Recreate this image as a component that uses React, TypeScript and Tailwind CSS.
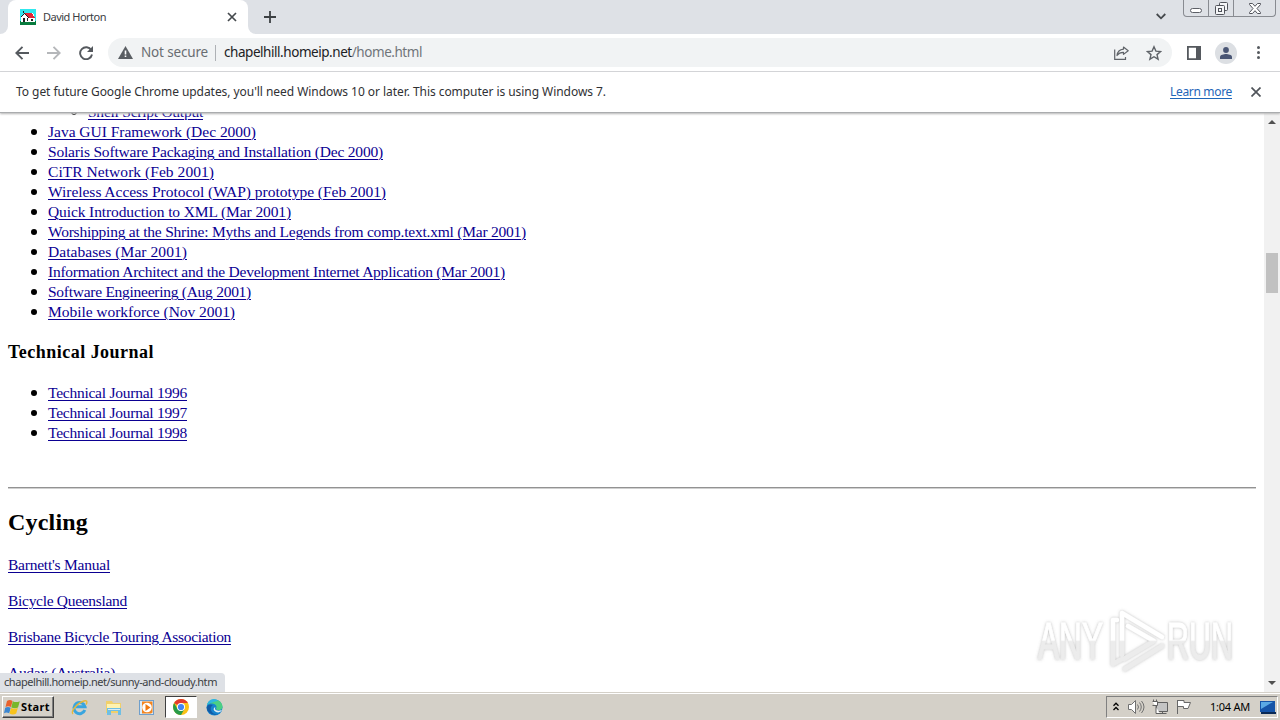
import { useLayoutEffect, useRef, type ReactNode } from "react";

/** Spaces a single line of text so that it fills the given width. */
function Fit({ w, className = "", children }: { w: number; className?: string; children: ReactNode }) {
  const ref = useRef<HTMLSpanElement>(null);
  useLayoutEffect(() => {
    const el = ref.current;
    if (!el) return;
    el.style.letterSpacing = "0px";
    const n = (el.textContent ?? "").length;
    el.style.letterSpacing = `${(w - el.getBoundingClientRect().width) / n}px`;
  }, [w]);
  return (
    <span ref={ref} className={`inline-block whitespace-nowrap ${className}`}>
      {children}
    </span>
  );
}

const publications: [string, number][] = [
  ["Java GUI Framework (Dec 2000)", 208],
  ["Solaris Software Packaging and Installation (Dec 2000)", 335],
  ["CiTR Network (Feb 2001)", 166],
  ["Wireless Access Protocol (WAP) prototype (Feb 2001)", 338],
  ["Quick Introduction to XML (Mar 2001)", 243],
  ["Worshipping at the Shrine: Myths and Legends from comp.text.xml (Mar 2001)", 478],
  ["Databases (Mar 2001)", 139],
  ["Information Architect and the Development Internet Application (Mar 2001)", 457],
  ["Software Engineering (Aug 2001)", 203],
  ["Mobile workforce (Nov 2001)", 187],
];
const journals: [string, number][] = [
  ["Technical Journal 1996", 139],
  ["Technical Journal 1997", 139],
  ["Technical Journal 1998", 139],
];
const cycling: [string, number][] = [
  ["Barnett's Manual", 102],
  ["Bicycle Queensland", 119],
  ["Brisbane Bicycle Touring Association", 223],
  ["Audax (Australia)", 107],
];

function PageLink({ text, w }: { text: string; w: number }) {
  return (
    <a className="text-[#0b0092]">
      <Fit w={w} className="underline decoration-1 underline-offset-2">{text}</Fit>
    </a>
  );
}

function LinkList({ items }: { items: [string, number][] }) {
  return (
    <ul>
      {items.map(([text, w]) => (
        <li key={text} className="flex h-5 items-center pl-[23px] leading-5">
          <span className="mr-[11px] size-[6px] rounded-full bg-black" />
          <PageLink text={text} w={w} />
        </li>
      ))}
    </ul>
  );
}

function TabStrip() {
  return (
    <header className="flex h-[34px] bg-[#dee1e6]">
      <div className="flex w-2 items-end bg-white"><div className="h-full w-full rounded-br-lg bg-[#dee1e6]" /></div>
      <div className="flex w-[240px] items-center rounded-t-lg bg-white pl-3">
        <svg className="size-4" viewBox="0 0 16 16" shapeRendering="crispEdges">
          <path fill="#30e8ee" d="M0 0h16v16H0z" />
          <path fill="#087b3e" d="M0 12h16v4H0z" />
          <path fill="#fff" d="M1 8l3-4h9l2 5v4H1z" />
          <path fill="#e32636" d="M5 4h7l3 5H9z" />
          <path fill="#222" d="M1 8l3-4 5 5H8L4 5 1 9zM3 9h2v4H3zM7 9h1v3H7zM11 10h2v2h-2zM3 2h1v2H3z" />
        </svg>
        <Fit w={63} className="ml-[7px] text-[11px] text-[#3c4043]">David Horton</Fit>
        <svg className="ml-auto mr-[11px] size-[10px]" viewBox="0 0 10 10" stroke="#45494d" strokeWidth="1.7">
          <path d="M1 1l8 8M9 1L1 9" />
        </svg>
      </div>
      <div className="w-2 bg-white"><div className="h-full w-full rounded-bl-lg bg-[#dee1e6]" /></div>
      <svg className="ml-2 mt-[11px] size-3" viewBox="0 0 12 12" stroke="#3c4043" strokeWidth="1.8">
        <path d="M6 0v12M0 6h12" />
      </svg>
      <svg className="ml-auto mr-[17px] mt-[13px] h-[7px] w-[10px]" viewBox="0 0 10 7" fill="none" stroke="#45494d" strokeWidth="1.8">
        <path d="M.7 1L5 5.3 9.3 1" />
      </svg>
      <div className="mr-1 flex h-[17px] w-[93px] rounded-b-[4px] border border-t-0 border-[#888b91] bg-[#dee1e6]">
        <div className="flex w-[25px] items-end justify-center border-r border-[#888b91] pb-[3px]">
          <span className="h-[5px] w-[12px] rounded-sm border border-[#5c5f66] bg-white" />
        </div>
        <div className="flex w-[25px] items-center justify-center border-r border-[#888b91]">
          <svg className="size-[13px]" viewBox="0 0 13 13" fill="#f4f5f7" stroke="#50535a">
            <rect x="4.5" y=".5" width="8" height="8" rx="1" />
            <rect x=".5" y="3.5" width="9" height="9" rx="1" />
            <rect x="3.5" y="6.5" width="3" height="3" />
          </svg>
        </div>
        <div className="flex flex-1 items-center justify-center">
          <svg className="h-[11px] w-3" viewBox="0 0 12 11" fill="#fff" stroke="#50535a" strokeLinejoin="round">
            <path d="M.5.5h3L6 3.3 8.5.5h3v1L8 5.5l3.500 4v1h-3L6 7.700 3.500 10.500h-3v-1L4 5.500.5 1.500z" />
          </svg>
        </div>
      </div>
    </header>
  );
}

function Toolbar() {
  return (
    <nav className="flex h-[38px] items-center border-b border-[#d5d7da] bg-white">
      <svg className="ml-[15px] size-[14px]" viewBox="0 0 14 14" fill="none" stroke="#55595e" strokeWidth="1.9">
        <path d="M14 7H1.500M7.500.8L1.300 7l6.200 6.200" />
      </svg>
      <svg className="ml-[18px] size-[14px]" viewBox="0 0 14 14" fill="none" stroke="#b5b7ba" strokeWidth="1.9">
        <path d="M0 7h12.500M6.500.8L12.700 7l-6.200 6.200" />
      </svg>
      <svg className="ml-[18px] size-[14px]" viewBox="0 0 14 14" fill="none" stroke="#55595e" strokeWidth="1.9">
        <path d="M12.300 4.200A6 6 0 1 0 13 8.500" />
        <path d="M14 0v6H8z" fill="#55595e" stroke="none" />
      </svg>
      <div className="ml-[15px] flex h-[29px] w-[1064px] items-center rounded-full bg-[#f1f3f4]">
        <svg className="ml-[10px] h-[13px] w-[15px]" viewBox="0 0 15 13">
          <path fill="#5a5e63" d="M7.500 0L15 13H0z" />
          <path fill="#fff" d="M6.700 4.500h1.600v4H6.700zM6.700 9.500h1.600v1.600H6.700z" />
        </svg>
        <Fit w={67} className="ml-2 text-[13.500px] text-[#696d72]">Not secure</Fit>
        <span className="ml-[7px] h-4 w-px bg-[#aeb1b5]" />
        <Fit w={198} className="ml-2 text-[13.500px] text-[#202124]">
          chapelhill.homeip.net<span className="text-[#70757a]">/home.html</span>
        </Fit>
        <svg className="ml-auto mr-[17px] h-[14px] w-[15px]" viewBox="0 0 15 14" fill="none" stroke="#5f6368" strokeWidth="1.200">
          <path d="M.7 3.500v9.800h10.800V11" />
          <path strokeLinejoin="round" d="M9.500 1l4.700 3.700-4.700 3.700V6.300C6.500 6.200 4.600 7.200 3 9.500c.4-3.500 2.500-6 6.500-6.400z" />
        </svg>
        <svg className="mr-[10px] size-[16px]" viewBox="0 0 16 16" fill="none" stroke="#5f6368" strokeWidth="1.400">
          <path d="M8 1.800l1.900 4.300 4.700.4-3.600 3.100 1.100 4.600L8 11.700l-4.100 2.500L5 9.600 1.400 6.500l4.700-.4z" />
        </svg>
      </div>
      <svg className="ml-[15px] h-[14px] w-[14px]" viewBox="0 0 14 14" fill="none" stroke="#55595e" strokeWidth="1.800">
        <path d="M.9.9h12.200v12.200H.9z" />
        <path fill="#55595e" stroke="none" d="M9 0h5v14H9z" />
      </svg>
      <div className="ml-[14px] flex size-[22px] items-center justify-center rounded-full bg-[#dcdfe3]">
        <svg className="size-3" viewBox="0 0 12 12" fill="#4a5675">
          <circle cx="6" cy="3" r="2.900" />
          <path d="M0 12V9.800C0 7.900 4 7 6 7s6 .9 6 2.800V12z" />
        </svg>
      </div>
      <div className="ml-5 flex flex-col gap-[2px]">
        <span className="size-[3px] rounded-full bg-[#55595e]" />
        <span className="size-[3px] rounded-full bg-[#55595e]" />
        <span className="size-[3px] rounded-full bg-[#55595e]" />
      </div>
    </nav>
  );
}

function InfoBar() {
  return (
    <div className="relative z-10 flex h-[41px] items-center border-b border-[#aaacae] bg-white pl-4 text-[12px] text-[#303134] shadow-[0_1px_2px_#b5b5b5]">
      <Fit w={590}>To get future Google Chrome updates, you'll need Windows 10 or later. This computer is using Windows 7.</Fit>
      <Fit w={62} className="ml-auto text-[#1f66b8] underline underline-offset-2">Learn more</Fit>
      <svg className="ml-[19px] mr-[19px] size-[10px]" viewBox="0 0 10 10" stroke="#50545a" strokeWidth="1.700">
        <path d="M.5.5l9 9M9.500.5l-9 9" />
      </svg>
    </div>
  );
}

function Watermark() {
  return (
    <svg className="absolute left-[1030px] top-[487px] h-[80px] w-[215px]" viewBox="0 0 215 80" fill="none">
      <defs>
        <filter id="soft" x="-10%" y="-10%" width="120%" height="120%">
          <feDropShadow dx="0" dy="0" stdDeviation="1.800" floodColor="#777" floodOpacity=".5" />
        </filter>
        <linearGradient id="tone" x1="0" y1="0" x2="0" y2="80" gradientUnits="userSpaceOnUse">
          <stop offset=".5" stopColor="#fff" />
          <stop offset=".52" stopColor="#ececec" />
        </linearGradient>
      </defs>
      <g filter="url(#soft)">
        <g fill="url(#tone)" fontFamily="Liberation Sans Narrow, Liberation Sans, sans-serif" fontSize="52">
          <text x="8" y="59" textLength="65" lengthAdjust="spacingAndGlyphs" stroke="url(#tone)">ANY</text>
          <text x="137" y="59" textLength="66" lengthAdjust="spacingAndGlyphs" stroke="url(#tone)">RUN</text>
        </g>
        <g stroke="url(#tone)" strokeWidth="4.500" strokeLinejoin="round" strokeLinecap="round">
          <path d="M92 55V13l40 24" />
          <path d="M98 26l26 15-30 18" />
          <path d="M87 20h-4v44l9-5M95 69l37-23" />
        </g>
      </g>
    </svg>
  );
}

function Viewport() {
  return (
    <div className="relative flex h-[579px] overflow-hidden bg-white">
      <main className="-mt-[11px] flex-1 px-2 font-['Liberation_Serif',serif] text-[15.500px] text-black">
        <div className="flex h-5 items-center pl-[63px]">
          <span className="mr-[11px] size-[6px] rounded-full border border-black" />
          <PageLink text="Shell Script Output" w={115} />
        </div>
        <LinkList items={publications} />
        <h3 className="mb-5 mt-[19px] text-[18px] font-bold leading-[22px]"><Fit w={146}>Technical Journal</Fit></h3>
        <LinkList items={journals} />
        <hr className="mt-[44px] h-[2px] border-0 border-b border-t border-b-[#d0d0d0] border-t-[#929292]" />
        <h2 className="mt-[19px] text-[24px] font-bold leading-7"><Fit w={80}>Cycling</Fit></h2>
        <div className="mt-[19px] flex flex-col gap-4">
          {cycling.map(([text, w]) => (
            <p key={text} className="h-5 leading-5"><PageLink text={text} w={w} /></p>
          ))}
        </div>
      </main>
      <div className="flex w-4 flex-col items-center bg-[#f1f1f1] py-[7px]">
        <svg className="h-1 w-[8px]" viewBox="0 0 8 4"><path fill="#505050" d="M0 4l4-4 4 4z" /></svg>
        <div className="mt-[129px] h-10 w-[12px] bg-[#c1c1c1]" />
        <svg className="mt-auto h-1 w-[8px]" viewBox="0 0 8 4"><path fill="#505050" d="M0 0l4 4 4-4z" /></svg>
      </div>
      <Watermark />
      <div className="absolute bottom-0 left-0 flex h-[19px] w-[225px] items-center rounded-tr-[4px] bg-[#dee1e6] pl-1 text-[11px] text-[#3c4043]">
        <Fit w={213}>chapelhill.homeip.net/sunny-and-cloudy.htm</Fit>
      </div>
    </div>
  );
}

function Taskbar() {
  return (
    <footer className="flex h-7 items-center border-t border-[#d4d0c8] bg-[#d4d0c8] pt-px text-[11px] text-black shadow-[inset_0_1px_0_#fff]">
      <div className="ml-[2px] flex h-[22px] w-[52px] items-center border border-b-[#404040] border-l-white border-r-[#404040] border-t-white shadow-[inset_-1px_-1px_0_#808080]">
        <svg className="ml-[1px] size-4" viewBox="0 0 16 16">
          <path fill="#e8612c" d="M3 2c2-1.500 3.500-1.500 5.500 0L7 8C5 7 3.500 7 1.500 8z" />
          <path fill="#78b72b" d="M8.800 2.200c2 1.200 4.500 1.200 7 0L14 8.500c-2 1-4.500 1-6.700 0z" />
          <path fill="#3b86d0" d="M1.200 8.700c2-1 3.500-1 5.500 0L5.200 14.200c-2-1-3.500-1-5.200 0z" />
          <path fill="#f8c31c" d="M7 9c2 1 4.500 1 6.800 0l-1.600 5.500c-2 1.200-4.500 1.200-6.700 0z" />
        </svg>
        <Fit w={29} className="ml-px text-[11px] font-bold">Start</Fit>
      </div>
      <svg className="ml-[17px] size-[17px]" viewBox="0 0 17 17" fill="none">
        <path stroke="#39a5df" strokeWidth="3" d="M13.800 11A5.600 5.600 0 1 1 14 7.800H5" />
        <path stroke="#e7b83a" strokeWidth="1.400" d="M2 15C-1 13 6 4 13 2c4-1 3 2 2 3.500" />
      </svg>
      <svg className="ml-[17px] size-[17px]" viewBox="0 0 17 17">
        <path fill="#f1d06b" d="M1 2h6l1 2h8v10H1z" />
        <path fill="#fff2b0" d="M2 5h13v4H2z" />
        <path fill="#6fbfe4" d="M2 9h14v7h-3v-4H6v4H2z" />
        <path fill="#d9ecf5" d="M3 10h12v1H3z" />
      </svg>
      <svg className="ml-[16px] size-[17px]" viewBox="0 0 17 17">
        <path fill="#6f9fcc" d="M1 1h15v15H1z" />
        <path fill="#dcebf7" d="M2 2h13v13H2z" />
        <path fill="#f4851f" d="M4 2.500h10.500v11L13 14.500H4z" />
        <circle cx="9" cy="8.500" r="4.800" fill="#fff" />
        <path fill="#f0780f" d="M7.500 5l5 3.500-5 3.500z" />
      </svg>
      <div className="ml-[10px] flex h-[22px] w-8 items-center justify-center border border-b-white border-l-[#404040] border-r-white border-t-[#404040] bg-white">
        <svg className="size-4" viewBox="0 0 16 16">
          <circle cx="8" cy="8" r="8" fill="#fbc116" />
          <path fill="#e33b2e" d="M8 8L1.100 4A8 8 0 0 1 14.900 4H8z" />
          <path fill="#289b49" d="M1.100 4A8 8 0 0 0 8 16l3.500-6L8 8 4.500 10z" />
          <circle cx="8" cy="8" r="4" fill="#fff" />
          <circle cx="8" cy="8" r="3.100" fill="#4285f4" />
        </svg>
      </div>
      <svg className="ml-[9px] size-[17px]" viewBox="0 0 17 17">
        <circle cx="8.500" cy="8.500" r="8" fill="#1684cf" />
        <path fill="#4bcf84" d="M1 6C3-1 15-1 16.500 7c.4 3-2 4.500-5 4-2-.3-1.500-1.500-1-2.500C11 5 5 3 1 6z" />
        <path fill="#2fb6e0" d="M1 6C3-1 9-1 12 1.500 9 3 5 3 1 6z" />
        <path fill="#125ba5" d="M7 6C2 9 6 17 13 14.800 7 17.500 0 13.500.8 8 2 5 5 5 7 6z" />
        <path fill="#e2eef2" d="M9.500 8c-1.500 2 .5 5 6.500 3-1 1.500-2 2-3.500 2.500C7 13 6.500 9 9.500 8z" />
      </svg>
      <div className="ml-auto mr-[2px] flex h-[22px] w-[172px] items-center border border-b-white border-l-[#808080] border-r-white border-t-[#808080]">
        <svg className="ml-[6px] h-[9px] w-[6px] -translate-y-px" viewBox="0 0 6 9" fill="none" stroke="#000" strokeWidth="1.300">
          <path d="M.5 3.700L3 1.200l2.500 2.500M.5 8L3 5.500 5.500 8" />
        </svg>
        <svg className="ml-[9px] h-4 w-[17px]" viewBox="0 0 17 16" fill="#fff" stroke="#707070">
          <path d="M.5 5.500h3l4-4v13l-4-4h-3z" />
          <path fill="none" d="M9.500 5.500q2 2.500 0 5M11.500 3.500q3.500 4.500 0 9M13.500 2q5 6 0 12" />
        </svg>
        <svg className="ml-[7px] size-4" viewBox="0 0 16 16" fill="#c4c4c4" stroke="#606060">
          <path d="M4.500 3.500h11v9h-11zM7.500 14.500h7M10.500 12.500v2" />
          <path fill="#fff" d="M.5 2.500h5v4H4v8h4M1.500.5v2M4.500.5v2M.5 6.500h3.500" />
        </svg>
        <svg className="ml-2 size-4" viewBox="0 0 16 16" fill="#fff" stroke="#686868">
          <path d="M1.500 1v14M1.500 1.500H8v2h6.500L12 9.500H7.500v-2h-6" />
        </svg>
        <Fit w={40} className="ml-[18px]">1:04 AM</Fit>
        <svg className="ml-[10px] h-[14px] w-4" viewBox="0 0 16 14">
          <path fill="#1654a8" d="M0 1h15v11H0z" />
          <path fill="#5ba9e5" d="M1 2h12L1 9z" />
          <path fill="#0b2955" d="M1 12h15v2H1z" />
        </svg>
      </div>
    </footer>
  );
}

export default function App() {
  return (
    <div className="flex h-[720px] w-[1280px] flex-col overflow-hidden bg-white font-['Noto_Sans',sans-serif]">
      <TabStrip />
      <Toolbar />
      <InfoBar />
      <Viewport />
      <Taskbar />
    </div>
  );
}
